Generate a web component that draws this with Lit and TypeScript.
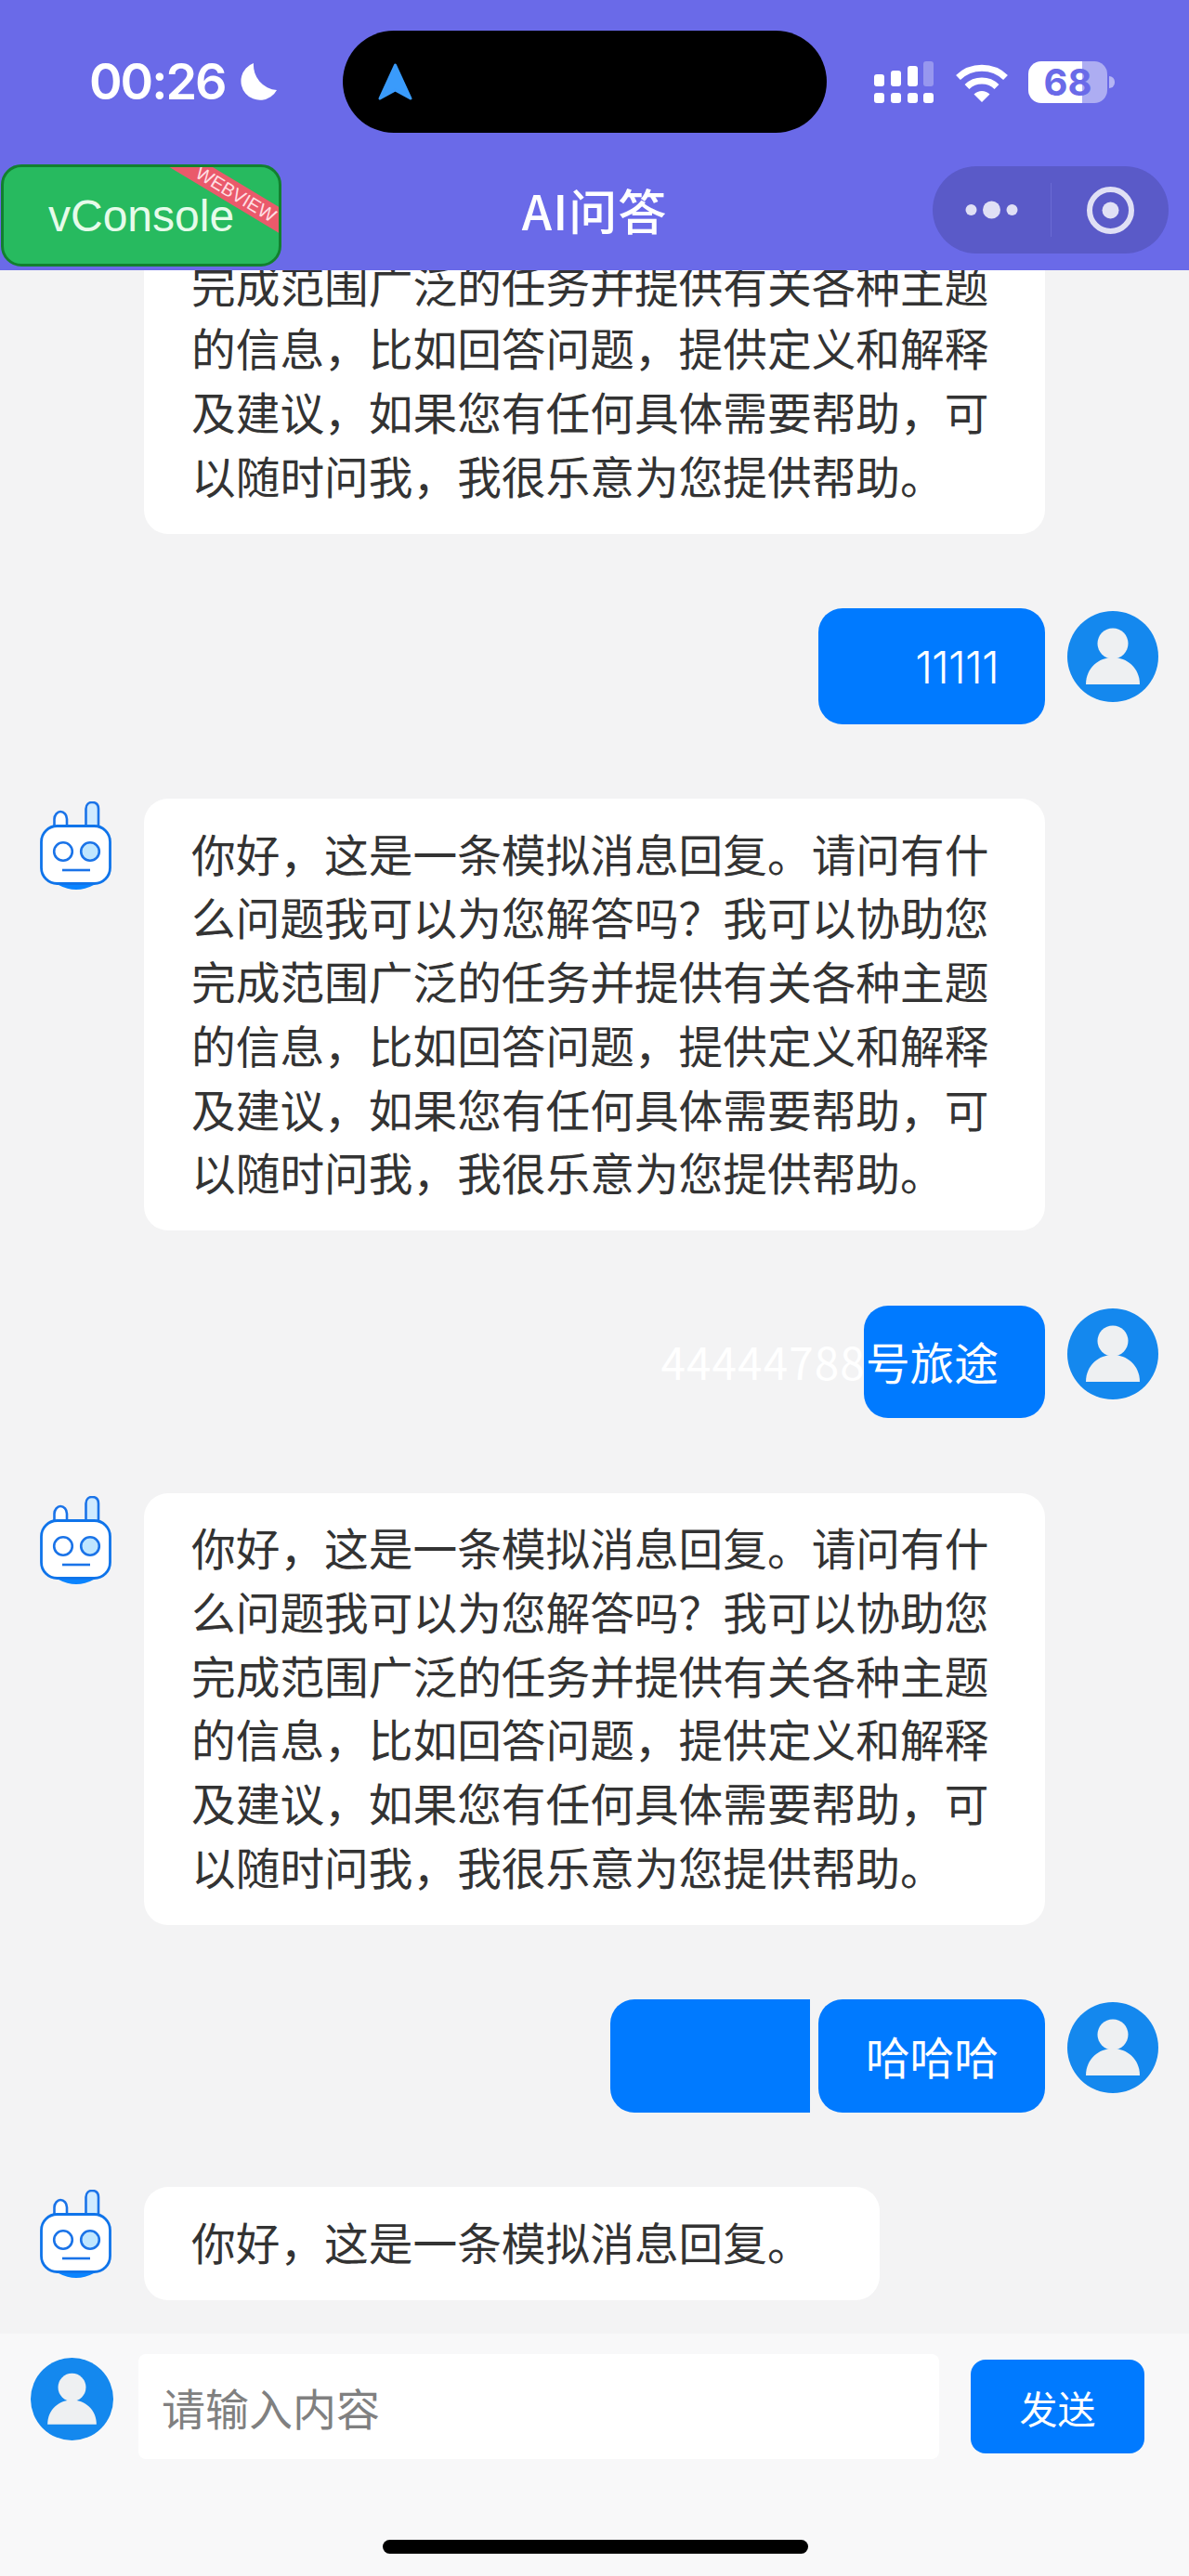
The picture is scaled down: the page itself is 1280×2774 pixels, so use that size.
import { LitElement, html, css, svg } from 'lit'
import { customElement } from 'lit/decorators.js'

const REPLY =
  '你好，这是一条模拟消息回复。请问有什么问题我可以为您解答吗？我可以协助您完成范围广泛的任务并提供有关各种主题的信息，比如回答问题，提供定义和解释及建议，如果您有任何具体需要帮助，可以随时问我，我很乐意为您提供帮助。'

const userAvatar = (cls = 'avatar') => html`
  <svg class=${cls} viewBox="0 0 98 98" aria-hidden="true">
    <circle cx="49" cy="49" r="49" fill="#1488ee" />
    <circle cx="49" cy="35" r="16.5" fill="#eef0f2" />
    <path d="M20 79C20 61 34 50 49 50C64 50 78 61 78 79Z" fill="#eef0f2" />
  </svg>
`

const botAvatar = html`
  <svg class="avatar" viewBox="0 0 98 98" aria-hidden="true">
    <path d="M30 90Q49 100 68 90Z" fill="#0a84ff" />
    <path d="M25.500 27V19C25.500 14.500 29 11 32 11C36 11 39 14.500 39 19V27" fill="#fff" stroke="#1a73e8" stroke-width="2.600" />
    <path d="M59.500 27V8C59.500 3 63 1 66 1C70 1 73 3 73 8V27" fill="#cfeaff" stroke="#1a73e8" stroke-width="2.600" />
    <rect x="11.500" y="26.500" width="74" height="62" rx="17" fill="#fff" stroke="#0f74ea" stroke-width="2.800" />
    <circle cx="35" cy="54" r="9.800" fill="#fff" stroke="#1a73e8" stroke-width="2.600" />
    <circle cx="64" cy="54" r="9.800" fill="#bfe6ff" stroke="#1a73e8" stroke-width="2.600" />
    <path d="M34 74H64" stroke="#1a73e8" stroke-width="2.600" />
  </svg>
`

const signalBars = [
  [0, 14, 13, 1],
  [18, 10, 17, 1],
  [36, 5, 22, 1],
  [53, 0, 27, 0.3],
]

type Message =
  | { from: 'bot'; text: string; short?: boolean }
  | { from: 'user'; text: string; digits?: string; size: string; pad?: boolean }

const messages: Message[] = [
  { from: 'bot', text: REPLY },
  { from: 'user', text: '', digits: '11111', size: 'wide' },
  { from: 'bot', text: REPLY },
  { from: 'user', text: '号旅途', digits: '44444788', size: 'narrow' },
  { from: 'bot', text: REPLY },
  { from: 'user', text: '哈哈哈', size: 'wide', pad: true },
  { from: 'bot', text: '你好，这是一条模拟消息回复。', short: true },
]

@customElement('app-root')
export class AppRoot extends LitElement {
  static styles = css`
    :host {
      display: flex;
      flex-direction: column;
      width: 1280px;
      height: 2774px;
      overflow: hidden;
      background: #f3f3f4;
      font-family: 'Noto Sans CJK SC', 'Noto Sans', sans-serif;
      color: #333;
    }

    .header {
      flex: none;
      height: 291px;
      background: #6a6ae8;
      color: #fff;
      position: relative;
      z-index: 1;
    }

    .status {
      display: grid;
      grid-template-columns: 369px 521px 1fr;
      height: 110px;
      padding-top: 33px;
      padding-bottom: 34px;
    }
    .status-left {
      display: flex;
      align-items: center;
      gap: 13px;
      padding-left: 96px;
    }
    .time {
      font-family: Inter, sans-serif;
      font-size: 54px;
      font-weight: 600;
      letter-spacing: -2px;
      line-height: 1;
    }
    .moon {
      width: 42px;
      height: 41px;
    }
    .island {
      background: #000;
      border-radius: 55px;
      display: flex;
      align-items: center;
      padding-left: 38px;
    }
    .arrow {
      width: 37px;
      height: 41px;
    }
    .status-right {
      display: flex;
      align-items: center;
      padding-left: 51px;
    }
    .signal {
      width: 64px;
      height: 45px;
    }
    .wifi {
      width: 58px;
      height: 43px;
      margin-left: 23px;
    }
    .battery {
      width: 85px;
      height: 45px;
      margin-left: 21px;
      border-radius: 14px;
      background: linear-gradient(to right, #fff 68%, rgba(255, 255, 255, 0.45) 68%);
      color: #6a6ae8;
      font-family: Inter, sans-serif;
      font-size: 40px;
      font-weight: 700;
      line-height: 45px;
      text-align: center;
    }
    .nub {
      width: 6px;
      height: 13px;
      margin-left: 2px;
      border-radius: 0 6px 6px 0;
      background: rgba(255, 255, 255, 0.5);
    }

    .nav {
      display: grid;
      grid-template-columns: 1fr auto 1fr;
      align-items: start;
      height: 114px;
    }
    .vconsole {
      position: relative;
      overflow: hidden;
      box-sizing: border-box;
      width: 302px;
      height: 110px;
      margin-left: 1px;
      border: 3px solid #12802f;
      border-radius: 22px;
      background: #27ba5f;
      color: #e6fbea;
      font-family: 'Liberation Sans', sans-serif;
      font-size: 48px;
      line-height: 106px;
      padding-left: 48px;
    }
    .ribbon {
      position: absolute;
      left: 130px;
      top: 17px;
      width: 240px;
      height: 24px;
      background: #ea5a6b;
      color: #ffdfe3;
      font-size: 20px;
      line-height: 24px;
      text-align: center;
      transform: rotate(31deg);
    }
    .title {
      font-size: 52px;
      font-weight: 500;
      letter-spacing: 1px;
      line-height: 98px;
    }
    .capsule {
      justify-self: end;
      display: flex;
      align-items: center;
      width: 254px;
      height: 94px;
      margin: 2px 22px 0 0;
      border-radius: 47px;
      background: #5a5ac8;
    }
    .more {
      width: 127px;
      height: 58px;
      border-right: 1px solid #6a6ad4;
      flex: none;
    }
    .target {
      width: 51px;
      height: 51px;
      margin-left: 38px;
    }

    .messages {
      flex: 1;
      min-height: 0;
      overflow: hidden;
      display: flex;
      flex-direction: column;
      justify-content: flex-end;
      gap: 80.300px;
      padding: 0 33px 36px;
    }
    .row {
      flex: none;
      display: flex;
      gap: 24px;
      align-items: flex-start;
    }
    .row.user {
      justify-content: flex-end;
    }
    .avatar {
      flex: none;
      width: 98px;
      height: 98px;
      margin-top: 3px;
    }
    .bubble {
      box-sizing: border-box;
      border-radius: 26px;
      font-size: 47.700px;
      line-height: 68.700px;
    }
    .bot .bubble {
      width: 970px;
      padding: 24.500px 52px 28.500px 51px;
      background: #fff;
    }
    .bot .bubble.short {
      width: 792px;
    }
    .user .bubble {
      display: flex;
      justify-content: flex-end;
      white-space: nowrap;
      padding: 26.500px 50px 26.500px 52px;
      background: #007aff;
      color: #fff;
    }
    .user .bubble.wide {
      width: 244px;
    }
    .user .bubble.narrow {
      width: 195px;
    }
    .wide .digits {
      font-family: Inter, sans-serif;
      letter-spacing: -0.800px;
      font-weight: 300;
    }
    .narrow .digits {
      letter-spacing: 1.100px;
    }
    .stub {
      flex: none;
      width: 215px;
      height: 121.700px;
      margin-right: -15px;
      border-radius: 26px 0 0 26px;
      background: #007aff;
    }

    .composer {
      flex: none;
      height: 261px;
      background: #f8f8f9;
      display: grid;
      grid-template-columns: 89px 862px 187px;
      grid-template-rows: 113px 1fr;
      column-gap: 27px;
      padding: 22px 0 0 33px;
      box-sizing: border-box;
    }
    .composer .avatar {
      width: 89px;
      height: 89px;
      margin-top: 4px;
    }
    input {
      box-sizing: border-box;
      min-width: 0;
      width: 100%;
      height: 113px;
      border: 0;
      border-radius: 8px;
      background: #fff;
      padding: 0 25px;
      font: 400 47px 'Noto Sans CJK SC', sans-serif;
      outline: none;
    }
    input::placeholder {
      color: #808080;
      opacity: 1;
    }
    .send {
      align-self: center;
      margin-left: 7px;
      width: 187px;
      height: 101px;
      border: 0;
      border-radius: 16px;
      background: #007aff;
      color: #fff;
      font: 400 41px 'Noto Sans CJK SC', sans-serif;
    }
    .home {
      grid-column: 1 / -1;
      justify-self: center;
      width: 458px;
      height: 15px;
      margin: 87px 0 0 24px;
      border-radius: 8px;
      background: #000;
    }
  `

  private renderStatus() {
    return html`
      <div class="status">
        <div class="status-left">
          <span class="time">00:26</span>
          <svg class="moon" viewBox="0 0 42 41" aria-hidden="true">
            <path d="M17 0A20.500 20.500 0 1 0 42 29A27 27 0 0 1 17 0Z" fill="#fff" />
          </svg>
        </div>
        <div class="island">
          <svg class="arrow" viewBox="0 0 37 41" aria-hidden="true">
            <path d="M18.500 2L35 38L18.500 29L2 38Z" fill="#3a9bfb" stroke="#3a9bfb" stroke-width="3" stroke-linejoin="round" />
          </svg>
        </div>
        <div class="status-right">
          <svg class="signal" viewBox="0 0 64 45" aria-hidden="true">
            ${signalBars.map(
              ([x, y, h, o]) => svg`
                <rect x=${x} y=${y} width="11" height=${h} rx="3" fill="#fff" opacity=${o} />
                <rect x=${x} y="34" width="11" height="11" rx="3" fill="#fff" />
              `
            )}
          </svg>
          <svg class="wifi" viewBox="0 0 58 43" aria-hidden="true">
            <path d="M3.500 16.500A37 37 0 0 1 54.500 16.500" fill="none" stroke="#fff" stroke-width="7" />
            <path d="M13 26.500A23 23 0 0 1 45 26.500" fill="none" stroke="#fff" stroke-width="7" />
            <path d="M29 43L20.500 34.500A12 12 0 0 1 37.500 34.500Z" fill="#fff" />
          </svg>
          <div class="battery">68</div>
          <div class="nub"></div>
        </div>
      </div>
    `
  }

  private renderNav() {
    return html`
      <div class="nav">
        <div class="vconsole">vConsole<div class="ribbon">WEBVIEW</div></div>
        <div class="title">AI问答</div>
        <div class="capsule">
          <svg class="more" viewBox="0 0 127 58" aria-hidden="true">
            <circle cx="41.500" cy="29" r="6" fill="#e0e0f5" />
            <circle cx="63.500" cy="29" r="9.500" fill="#e0e0f5" />
            <circle cx="85.500" cy="29" r="6" fill="#e0e0f5" />
          </svg>
          <svg class="target" viewBox="0 0 51 51" aria-hidden="true">
            <circle cx="25.500" cy="25.500" r="22.500" fill="none" stroke="#e0e0f5" stroke-width="6" />
            <circle cx="25.500" cy="25.500" r="9" fill="#e0e0f5" />
          </svg>
        </div>
      </div>
    `
  }

  private renderMessage(m: Message) {
    if (m.from === 'bot') {
      return html`
        <div class="row bot">
          ${botAvatar}
          <div class="bubble ${m.short ? 'short' : ''}">${m.text}</div>
        </div>
      `
    }
    return html`
      <div class="row user">
        ${m.pad ? html`<div class="stub"></div>` : ''}
        <div class="bubble ${m.size}">
          <span>${m.digits ? html`<span class="digits">${m.digits}</span>` : ''}${m.text}</span>
        </div>
        ${userAvatar()}
      </div>
    `
  }

  render() {
    return html`
      <div class="header">${this.renderStatus()}${this.renderNav()}</div>
      <div class="messages">${messages.map((m) => this.renderMessage(m))}</div>
      <div class="composer">
        ${userAvatar()}
        <input placeholder="请输入内容" />
        <button class="send">发送</button>
        <div class="home"></div>
      </div>
    `
  }
}

declare global {
  interface HTMLElementTagNameMap {
    'app-root': AppRoot
  }
}
